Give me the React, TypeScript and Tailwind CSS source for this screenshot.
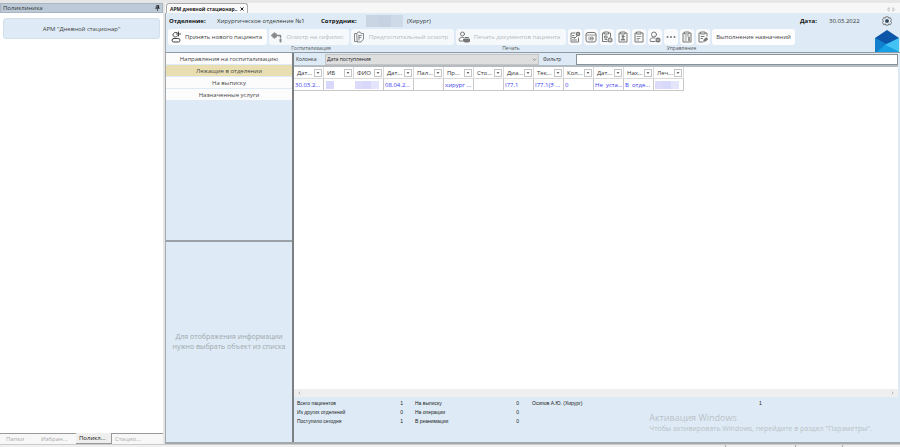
import type { ReactNode } from 'react';
import clsx from 'clsx';

const NAV_ITEMS = ['Направления на госпитализацию', 'Лежащие в отделении', 'На выписку', 'Назначенные услуги'];

const COLUMNS = [
  { title: 'Дат...', value: '30.03.2...' },
  { title: 'ИБ', value: '' },
  { title: 'ФИО', value: '' },
  { title: 'Дат...', value: '08.04.2...' },
  { title: 'Пал...', value: '' },
  { title: 'Пр...', value: 'хирург ...' },
  { title: 'Сто...', value: '' },
  { title: 'Диа...', value: 'I77.1' },
  { title: 'Тек...', value: 'I77.1(З ...' },
  { title: 'Кол...', value: '0' },
  { title: 'Дат...', value: 'Не  уста...' },
  { title: 'Нах...', value: 'В  отде...' },
  { title: 'Леч...', value: '' },
];

const TOTALS = [
  ['Всего пациентов', '1', 'На выписку', '0'],
  ['Из других отделений', '0', 'На операции', '0'],
  ['Поступило сегодня', '1', 'В реанимации', '0'],
];

const BOTTOM_TABS = ['Папки', 'Избран...', 'Поликл...', 'Стацио...'];

function Icon({ children, className }: { children: ReactNode; className?: string }) {
  return (
    <svg
      viewBox="0 0 24 24"
      fill="none"
      stroke="currentColor"
      strokeWidth="2"
      strokeLinecap="round"
      strokeLinejoin="round"
      className={clsx('h-3 w-3 shrink-0', className)}
    >
      {children}
    </svg>
  );
}

const clipboard = (
  <>
    <path d="M7 4H4v18h16V4h-3" />
    <path d="M8 2h8v4H8z" />
  </>
);

const MANAGE_ICONS: { label: string; icon: ReactNode }[] = [
  {
    label: 'Редактировать запись',
    icon: (
      <>
        <path d="M12 4H4v18h15v-8" />
        <path d="M7 9h3M7 13h4M7 18h8M11 15l5-5" />
        <circle cx="18" cy="6" r="4.500" fill="currentColor" stroke="none" />
        <circle cx="18" cy="6" r="1.500" fill="#fafafa" stroke="none" />
      </>
    ),
  },
  {
    label: 'Календарь',
    icon: (
      <>
        <rect x="2" y="3" width="20" height="19" rx="4" />
        <path d="M2 8h20" strokeWidth="1.500" />
        <path d="M8 12v6M12 12h4v6h-4zM12 15h4" strokeWidth="1.500" />
      </>
    ),
  },
  {
    label: 'Добавить назначение',
    icon: (
      <>
        <path d="M7 4H3v17h9M15 4h4v8M7 2h8v4H7zM8 10h4v4H8zM8 17h3" />
        <circle cx="18" cy="18" r="5" fill="currentColor" stroke="none" />
        <path d="M18 15.500v5M15.500 18h5" stroke="#fafafa" strokeWidth="1.500" />
      </>
    ),
  },
  {
    label: 'Карта пациента',
    icon: (
      <>
        {clipboard}
        <circle cx="12" cy="11" r="2" fill="currentColor" />
        <path d="M8 18c0-4 8-4 8 0z" fill="currentColor" strokeWidth="1" />
      </>
    ),
  },
  {
    label: 'Список документов',
    icon: (
      <>
        {clipboard}
        <path d="M8 11h8M8 15h6M8 18h3" strokeWidth="1.500" />
      </>
    ),
  },
  {
    label: 'Добавить пациента',
    icon: (
      <>
        <circle cx="10" cy="7" r="5" />
        <path d="M12 21H3c-3-7 4-8 9-7" />
        <circle cx="18" cy="18" r="5" fill="currentColor" stroke="none" />
        <path d="M16 18h4" stroke="#fafafa" strokeWidth="1.500" />
      </>
    ),
  },
  {
    label: 'Ещё',
    icon: (
      <g fill="currentColor" stroke="none">
        <circle cx="5" cy="12" r="2" />
        <circle cx="12" cy="12" r="2" />
        <circle cx="19" cy="12" r="2" />
      </g>
    ),
  },
  {
    label: 'История',
    icon: (
      <>
        {clipboard}
        <path d="M8 10h8M8 14h3M8 18h3" strokeWidth="1.500" />
        <path d="M16 13v6" strokeWidth="3" />
      </>
    ),
  },
  {
    label: 'Подписать',
    icon: (
      <>
        <path d="M7 4H4v18h7M17 4h3v6M8 2h8v4H8zM8 11h6M8 15h3" />
        <path d="M13 21l1-4 4-4 4 3-4 4z" fill="currentColor" strokeWidth="1" />
      </>
    ),
  },
];

interface ToolButtonProps {
  label: string;
  disabled?: boolean;
  className: string;
  children: ReactNode;
}

function ToolButton({ label, disabled, className, children }: ToolButtonProps) {
  return (
    <button
      disabled={disabled}
      className={clsx(
        'flex h-4 shrink-0 items-center rounded-[3px] pr-[2px] pl-[2px]',
        disabled ? 'bg-[#f6f9fb] text-[#b4b8bb]' : 'bg-[#fdfdfd] text-[#444]',
        className,
      )}
    >
      {children}
      <span className="flex-1 text-center whitespace-nowrap">{label}</span>
    </button>
  );
}

function ToolGroup({ title, children }: { title: string; children: ReactNode }) {
  return (
    <div className="flex shrink-0 flex-col">
      <div className="flex gap-[2px]">{children}</div>
      <div className="text-center text-[5px] leading-[7px] text-[#555]">{title}</div>
    </div>
  );
}

function LeftPanel() {
  return (
    <aside className="flex w-[163px] shrink-0 flex-col bg-white">
      <div className="flex h-[10px] items-center justify-between border border-[#a9b5c0] bg-[#bccad8] px-[2px]">
        <span className="text-[#333]">Поликлиника</span>
        <svg viewBox="0 0 8 10" className="h-[6px] w-[5px]" stroke="#111" fill="none">
          <path d="M2 1h4v4H2zM0 5.500h8M4 6v4" />
          <path d="M5 1v4" strokeWidth="2" />
        </svg>
      </div>
      <div className="flex-1 px-[3px] py-[5px]">
        <button className="h-[21px] w-full rounded-[3px] border border-[#d3e0ea] bg-[#deebf6] text-[#444]">
          АРМ "Дневной стационар"
        </button>
      </div>
      <div className="flex h-[11px] bg-[#f7f7f7]">
        {BOTTOM_TABS.map((tab) => (
          <button
            key={tab}
            className={clsx(
              'text-left',
              tab === 'Поликл...'
                ? 'w-9 border-r border-b border-[#999] bg-[#efefef] text-[#111]'
                : 'border-t border-[#999] text-[#aaa]',
              tab === 'Папки' ? 'w-[38px] pl-[6px]' : 'pl-[3px]',
              tab === 'Избран...' && 'w-[38px]',
              tab === 'Стацио...' && 'flex-1',
            )}
          >
            {tab}
          </button>
        ))}
      </div>
    </aside>
  );
}

function Logo() {
  return (
    <svg viewBox="0 0 24 22" className="mt-px h-[22px] w-6 shrink-0">
      <path d="M0 8h24v14H0z" fill="#1490dc" />
      <path d="M12 0l12 8-13 6L0 8z" fill="#0d55a8" />
      <path d="M0 8l11 6-9 8H0z" fill="#1280cc" />
      <path d="M24 8L10 15l14 7z" fill="#45c2f4" />
      <path d="M10 15l14 7H2z" fill="#17a0e6" />
    </svg>
  );
}

function Header() {
  return (
    <header className="border-b border-[#8f9aa3] bg-[#deebf6]">
      <div className="flex h-4 items-center pr-[8px] pl-[3px] text-[#333]">
        <b className="w-12 text-[#111]">Отделение:</b>
        <span className="w-[104px] whitespace-nowrap">Хирургическое отделение №1</span>
        <b className="w-[45px] text-[#111]">Сотрудник:</b>
        <span className="flex h-3 w-[37px]">
          <i className="flex-1 bg-[#cad5e4]" />
          <i className="flex-1 bg-[#c6d1e1]" />
          <i className="flex-1 bg-[#cfdae8]" />
        </span>
        <span className="ml-1">(Хирург)</span>
        <b className="ml-auto w-[29px] text-[#111]">Дата:</b>
        <span className="w-[53px]">30.03.2022</span>
        <button aria-label="Настройки">
          <svg viewBox="0 0 24 24" className="h-[10px] w-[10px]" fill="none" stroke="#666" strokeWidth="2">
            <path d="M9 2h6l1 3 4-1 3 6-3 2 3 3-3 6-4-2-1 3H9l-1-3-4 2-3-6 3-3-3-2 3-6 4 1z" />
            <circle cx="12" cy="12" r="4" fill="#24496e" />
          </svg>
        </button>
      </div>
      <div className="flex justify-between pr-px pl-[2px]">
        <div className="flex gap-[2px]">
          <ToolGroup title="Госпитализация">
            <ToolButton label="Принять нового пациента" className="w-[99px]">
              <Icon>
                <path d="M15 4c-4-3-9 0-9 4s6 6 10 1M13 6h8M17 2v8" />
                <rect x="4" y="15" width="16" height="7" rx="3.500" />
              </Icon>
            </ToolButton>
            <ToolButton label="Осмотр на сифилис" disabled className="w-20">
              <Icon className="text-[#888]">
                <path d="M1 9h14M7 4v10M4 6h6v6H4zM15 9h4v4" strokeWidth="3" />
                <path d="M19 17v4" strokeWidth="4" />
              </Icon>
            </ToolButton>
            <ToolButton label="Предгоспитальный осмотр" disabled className="w-[103px]">
              <Icon className="text-[#888]">
                <path d="M7 5H3v16h6M8 5l2-3h4l2 3h5v11l-5 6H9z" />
                <path d="M12 9h5M12 9v9M12 13h4" />
              </Icon>
            </ToolButton>
          </ToolGroup>
          <ToolGroup title="Печать">
            <ToolButton label="Печать документов пациента" disabled className="w-[110px]">
              <Icon className="text-[#777]">
                <circle cx="9" cy="6" r="4" />
                <path d="M9 20H3c-3-6 3-8 8-7" />
                <path d="M12 16h11v5H12zM14 13h7M14 22h7" fill="currentColor" />
              </Icon>
            </ToolButton>
          </ToolGroup>
          <ToolGroup title="Управление">
            {MANAGE_ICONS.map(({ label, icon }) => (
              <button
                key={label}
                aria-label={label}
                className="flex h-4 w-[14px] items-center justify-center rounded-[3px] bg-[#fafbfc] text-[#777]"
              >
                <Icon>{icon}</Icon>
              </button>
            ))}
            <button className="h-4 w-[83px] rounded-[3px] bg-[#fdfdfd] text-[#444]">Выполнение назначений</button>
          </ToolGroup>
        </div>
        <Logo />
      </div>
    </header>
  );
}

function SideColumn() {
  return (
    <div className="flex w-[126px] shrink-0 flex-col bg-[#deebf6]">
      <nav className="flex h-[187px] flex-col gap-px">
        {NAV_ITEMS.map((item, i) => (
          <button
            key={item}
            className={clsx(
              'h-[11px] shrink-0 rounded-[1px] text-[#444]',
              i === 1 ? 'bg-[#e8deb2]' : 'bg-[#fcfcfc]',
            )}
          >
            {item}
          </button>
        ))}
      </nav>
      <div className="flex flex-1 items-center justify-center border-t-2 border-[#9aa1a7]">
        <p className="text-center text-[7px] leading-[10px] whitespace-nowrap text-[#a0a6ab]">
          Для отображения информации
          <br />
          нужно выбрать объект из списка
        </p>
      </div>
    </div>
  );
}

function FilterBar() {
  return (
    <div className="flex h-[14px] items-center border-b-2 border-[#b4bbc1] bg-[#deebf6] pl-[2px] text-[5px] text-[#333]">
      <label htmlFor="column" className="w-[29px]">
        Колонка
      </label>
      <div className="relative h-[11px] w-[214px]">
        <select
          id="column"
          className="block h-full w-full appearance-none border border-[#c4c4c4] bg-[#dedede] pl-px text-[#222]"
        >
          <option>Дата поступления</option>
        </select>
        <svg viewBox="0 0 8 5" className="pointer-events-none absolute top-1 right-[2px] h-[3px] w-[5px]">
          <path d="M1 1l3 3 3-3" fill="none" stroke="#666" />
        </svg>
      </div>
      <label htmlFor="filter" className="w-[37px] pl-1">
        Фильтр
      </label>
      <input id="filter" className="h-[11px] min-w-0 flex-1 border border-[#8a9299] bg-white px-1" />
    </div>
  );
}

function MaskedValue() {
  return (
    <span className="flex h-2">
      <i className="w-2 bg-[#dcdcfa]" />
      <i className="w-2 bg-[#d8d8fa]" />
      <i className="w-2 bg-[#e4e4fb]" />
    </span>
  );
}

function PatientTable() {
  return (
    <table className="w-[390px] table-fixed border-separate border-spacing-0">
      <thead>
        <tr className="h-3">
          {COLUMNS.map((c, i) => (
            <th key={i} className="border-r border-b border-[#dadada] p-0 font-normal text-[#333]">
              <div className="flex items-center justify-between pr-px pl-[3px]">
                {c.title}
                <button
                  aria-label={`Фильтр: ${c.title}`}
                  className="flex h-2 w-2 items-center justify-center border border-[#c4c4c4]"
                >
                  <svg viewBox="0 0 6 4" className="h-[2px] w-1">
                    <path d="M0 0h6L3 4z" fill="#666" />
                  </svg>
                </button>
              </div>
            </th>
          ))}
        </tr>
      </thead>
      <tbody>
        <tr className="h-3">
          {COLUMNS.map((c, i) => (
            <td
              key={i}
              className={clsx(
                'overflow-hidden border-b border-[#c8c8c8] p-0 pl-px whitespace-pre text-[#3b3bf0]',
                i !== 1 && 'border-r',
              )}
            >
              {i === 1 && <span className="ml-px block h-2 w-2 bg-[#d8d8fa]" />}
              {(i === 2 || i === 12) && <MaskedValue />}
              {c.value}
            </td>
          ))}
        </tr>
      </tbody>
    </table>
  );
}

function Footer() {
  return (
    <footer className="flex h-[45px] bg-[#deebf6] pt-[2px] pl-[3px] font-['Liberation_Sans',Arial,sans-serif] text-[5px] leading-[9px] text-[#222]">
      <table className="h-[27px] w-[222px] shrink-0 table-fixed">
        <tbody>
          {TOTALS.map(([label, count, label2, count2]) => (
            <tr key={label}>
              <td className="w-[90px] p-0">{label}</td>
              <td className="w-4 p-0 text-right">{count}</td>
              <td className="w-[100px] p-0 pl-3">{label2}</td>
              <td className="w-4 p-0 text-right">{count2}</td>
            </tr>
          ))}
        </tbody>
      </table>
      <span className="min-w-0 flex-1 pl-[13px]">Осипов А.Ю. (Хирург)</span>
      <span className="w-[139px]">1</span>
    </footer>
  );
}

export default function App() {
  return (
    <div className="relative flex h-screen flex-col overflow-hidden bg-[#e6e6e6] pt-[3px] font-['Open_Sans','Noto_Sans',sans-serif] text-[6px] leading-[8px]">
      <div className="flex min-h-0 flex-1">
        <LeftPanel />
        <main className="ml-[2px] flex min-w-0 flex-1 flex-col">
          <div className="flex h-[10px] items-end justify-between bg-[#f7f7f7] pr-1">
            <div className="ml-px flex h-[10px] w-[82px] items-center justify-between rounded-t-[3px] border border-b-0 border-[#aaa] bg-[#fafafa] pr-[3px] pl-[3px] text-[5px]">
              <b className="whitespace-nowrap text-[#222]">АРМ дневной стационар..</b>
              <button aria-label="Закрыть">
                <svg viewBox="0 0 8 8" className="h-1 w-1" stroke="#222" strokeWidth="2">
                  <path d="M1 1l6 6M7 1L1 7" />
                </svg>
              </button>
            </div>
            <svg viewBox="0 0 16 8" className="mb-px h-[5px] w-[10px]" fill="none" stroke="#aaa">
              <path d="M5 1L2 4l3 3zM11 1l3 3-3 3z" />
            </svg>
          </div>
          <div className="flex min-h-0 flex-1 flex-col border-b-2 border-l border-[#a3a8ad]">
            <Header />
            <div className="flex min-h-0 flex-1">
              <SideColumn />
              <section className="flex min-w-0 flex-1 flex-col border-l-2 border-[#7c8083] bg-[#deebf6] pr-[2px]">
                <FilterBar />
                <div className="min-h-0 flex-1 bg-white">
                  <PatientTable />
                </div>
                <div className="flex h-2 items-center justify-between bg-[#efefef] px-1">
                  <svg viewBox="0 0 4 6" className="h-1 w-[3px]" fill="none" stroke="#999">
                    <path d="M3 1L1 3l2 2" />
                  </svg>
                  <svg viewBox="0 0 4 6" className="h-1 w-[3px]" fill="none" stroke="#999">
                    <path d="M1 1l2 2-2 2" />
                  </svg>
                </div>
                <Footer />
              </section>
            </div>
          </div>
        </main>
      </div>
      <div className="flex h-[3px] justify-end border-t border-[#ccc] bg-[#f0f0f0] pr-[57px]">
        <i className="w-[70px] border-l border-[#aaa]" />
        <i className="w-12 border-x border-[#aaa]" />
      </div>

      {/* system watermark over the window */}
      <div className="pointer-events-none absolute right-[28px] bottom-[14px] leading-[9px] text-[#b9c0c6]">
        <div className="text-[9px] leading-3">Активация Windows</div>
        <div className="text-[7px]">Чтобы активировать Windows, перейдите в раздел "Параметры".</div>
      </div>
    </div>
  );
}
